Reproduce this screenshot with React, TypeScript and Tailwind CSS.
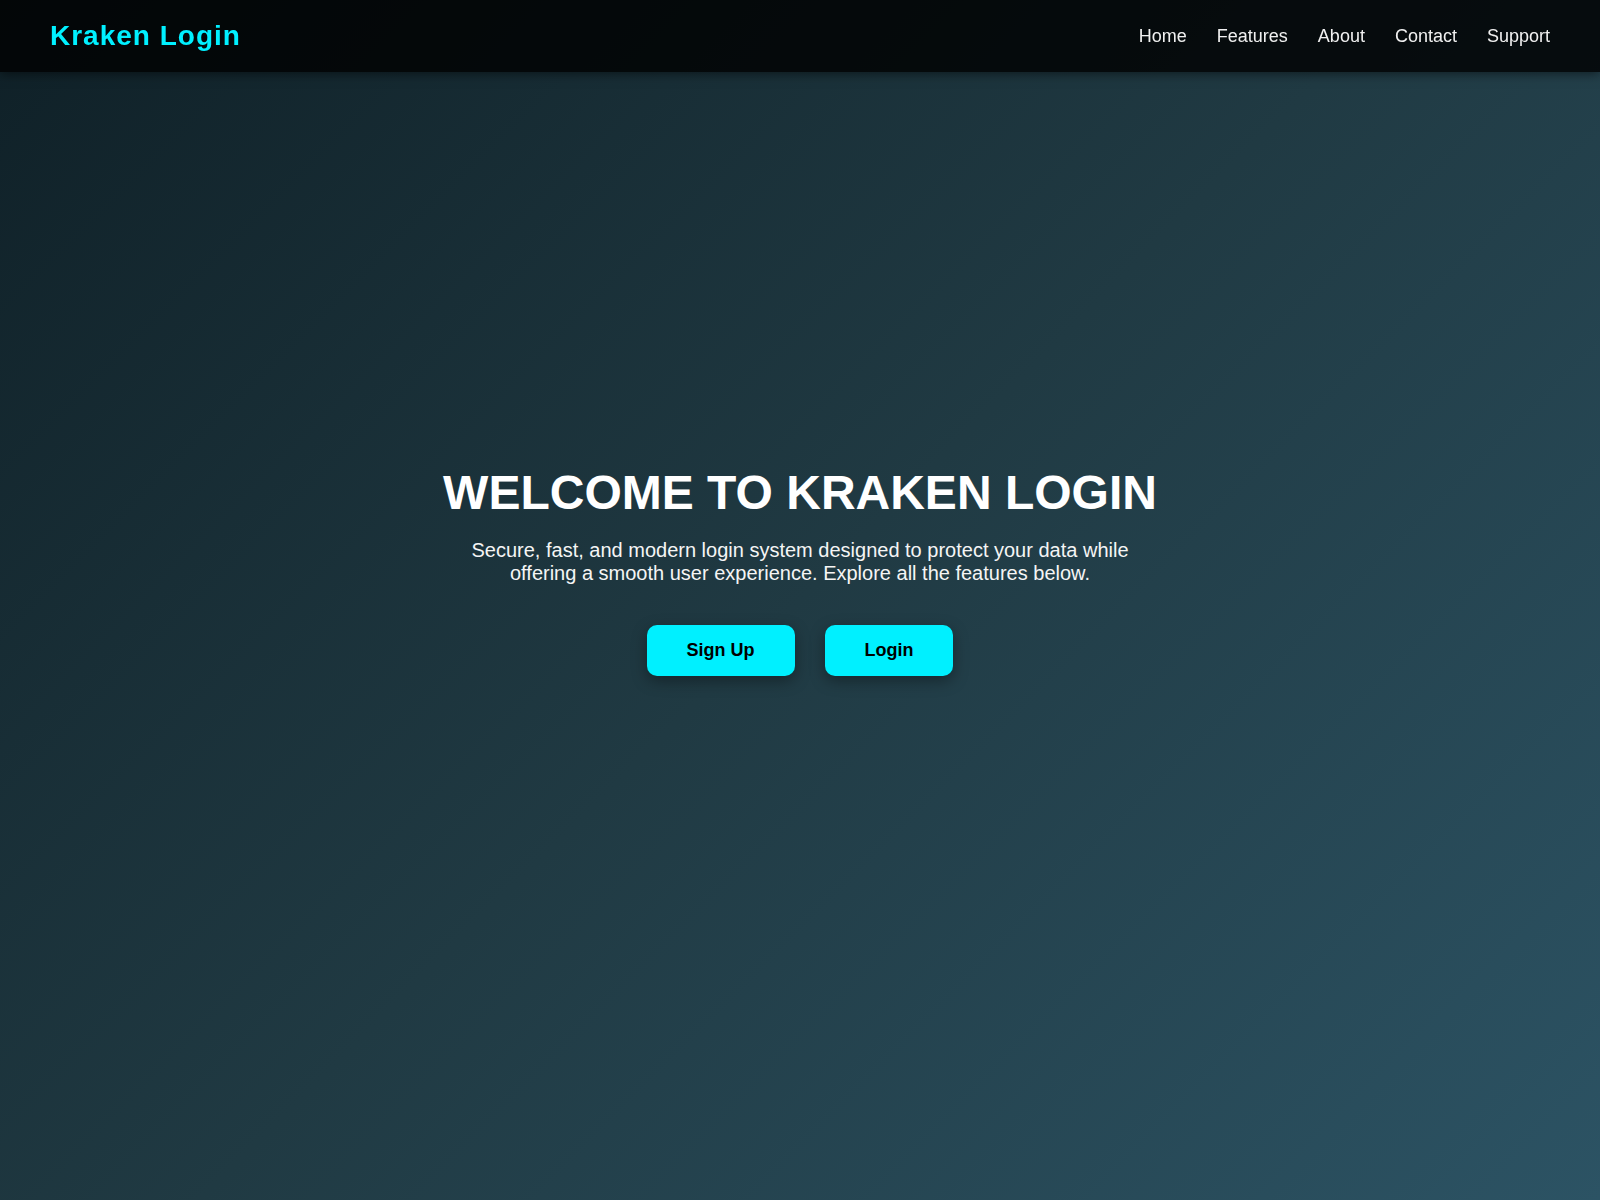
const navLinks = ["Home", "Features", "About", "Contact", "Support"];

export default function App() {
  return (
    <div
      className="min-h-screen text-white bg-[linear-gradient(135deg,#0f2027,#203a43,#2c5364)]"
      style={{ fontFamily: '"Liberation Sans", Arial, sans-serif' }}
    >
      <header className="fixed top-0 left-0 right-0 z-10 flex h-[72px] items-center justify-between bg-black/80 px-[50px] shadow-[0_2px_10px_rgba(0,0,0,0.5)]">
        <div className="text-[28px] font-bold tracking-[1px] text-[#00f0ff]">Kraken Login</div>
        <nav className="flex items-center gap-[30px]">
          {navLinks.map((link) => (
            <a key={link} href="#" className="text-[18px] text-[#f0f0f0]">
              {link}
            </a>
          ))}
        </nav>
      </header>

      <main className="flex min-h-screen flex-col items-center justify-center pb-[60px] text-center">
        <h1 className="text-[48px] font-bold uppercase leading-[55px] text-white">Welcome to Kraken Login</h1>
        <p className="mt-[19px] max-w-[700px] text-[20px] leading-[23px] text-[#f5f5f5]">
          Secure, fast, and modern login system designed to protect your data while offering a smooth user experience. Explore all the features below.
        </p>
        <div className="mt-[40px] flex gap-[30px]">
          <button
            type="button"
            className="rounded-[10px] bg-[#00f0ff] px-10 py-[15px] text-[18px] font-bold leading-[21px] text-black shadow-[0_5px_15px_rgba(0,0,0,0.35)]"
          >
            Sign Up
          </button>
          <button
            type="button"
            className="rounded-[10px] bg-[#00f0ff] px-10 py-[15px] text-[18px] font-bold leading-[21px] text-black shadow-[0_5px_15px_rgba(0,0,0,0.35)]"
          >
            Login
          </button>
        </div>
      </main>
    </div>
  );
}
